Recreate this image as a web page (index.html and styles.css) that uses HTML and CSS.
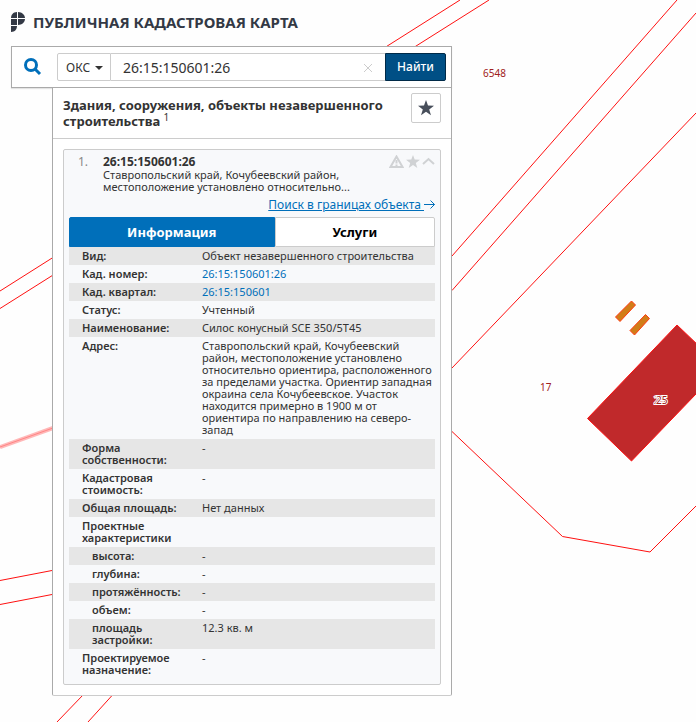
FILE: index.html
```html
<!DOCTYPE html>
<html lang="ru">
<head>
    <meta charset="UTF-8">
    <meta name="viewport" content="width=device-width, initial-scale=1.0">
    <title>Публичная кадастровая карта</title>
    <link rel="stylesheet" href="styles.css">
</head>
<body>
    <!-- Map layer -->
    <svg class="map" viewBox="0 0 696 722" preserveAspectRatio="xMinYMin slice" aria-hidden="true">
        <g class="borders">
            <path d="M460 0L0 291M489 0L0 308.5"/>
            <path d="M677 0L452 256M696 13L452 290.5"/>
            <path d="M696 113L452 368"/>
            <path d="M452 431.5L562.5 536.5L650 552"/>
            <path d="M650 552L696 506"/>
            <path d="M0 580.5L52 570.5M0 604.5L52 594.5"/>
            <path d="M83 695L57 722M112.5 695L88 722"/>
        </g>
        <path class="zone" d="M0 447L53 428"/>
        <path class="zone-axis" d="M0 447L53 428"/>
        <path class="building" d="M677 325L587.5 418.5L631.5 461L721.5 367.5Z"/>
        <path class="structure" d="M631.5 301L635.5 305L620 321.5L615.5 317Z"/>
        <path class="structure" d="M645.5 314.5L649.5 318.5L634.5 335L630 330.5Z"/>
        <text class="label" x="483" y="77">6548</text>
        <text class="label" x="540" y="391">17</text>
        <text class="label label-halo" x="654" y="404">23</text>
        <text class="label label-halo" x="656" y="404">25</text>
    </svg>

    <header class="header">
        <svg class="logo" width="14" height="20" viewBox="0 0 14 20" aria-hidden="true">
            <path d="M6 0V6H0C0 3 2 0 6 0ZM7 0C11 0 14 3 14 6H7ZM0 7H6V13H0ZM7 7H14C14 10 11 13 7 13ZM0 14H6C6 17 4 20 0 20Z"/>
        </svg>
        <h1 class="title">ПУБЛИЧНАЯ КАДАСТРОВАЯ КАРТА</h1>
    </header>

    <main class="sidebar">
        <form class="search" onsubmit="return false">
            <svg class="search-icon" width="18" height="18" viewBox="0 0 18 18" aria-hidden="true">
                <circle cx="7" cy="7" r="5.5"/>
                <path d="M11 11L16 16"/>
            </svg>
            <div class="search-group">
                <div class="select-wrap">
                    <select class="type-select" aria-label="Тип объекта">
                        <option>ОКС</option>
                        <option>Участки</option>
                    </select>
                    <svg class="caret" width="8" height="4" viewBox="0 0 8 4" aria-hidden="true"><path d="M0 0H8L4 4Z"/></svg>
                </div>
                <div class="query-wrap">
                    <input class="query" id="query" type="text" value="26:15:150601:26" aria-label="Кадастровый номер">
                    <button class="clear-btn" type="button" aria-label="Очистить" onclick="document.getElementById('query').value = ''">
                        <svg width="10" height="10" viewBox="0 0 10 10"><path d="M1 1L9 9M9 1L1 9"/></svg>
                    </button>
                </div>
                <button class="find-btn" type="submit">Найти</button>
            </div>
        </form>

        <section class="results">
            <div class="results-head">
                <h2 class="results-title">Здания, сооружения, объекты незавершенного строительства <sup>1</sup></h2>
                <button class="fav-btn" type="button" aria-label="Избранное">
                    <svg width="18" height="18" viewBox="0 0 18 18"><path d="M9 1L11 6.6L17 6.8L12.2 10.4L14 16.3L9 12.8L4 16.3L5.8 10.4L1 6.8L7 6.6Z"/></svg>
                </button>
            </div>

            <article class="card">
                <div class="card-head">
                    <span class="card-num">1.</span>
                    <div class="card-text">
                        <h3 class="card-title">26:15:150601:26</h3>
                        <p class="card-address">Ставропольский край, Кочубеевский район,<br>местоположение установлено относительно...</p>
                    </div>
                    <div class="card-tools">
                        <svg width="15" height="13" viewBox="0 0 15 13" aria-hidden="true">
                            <path class="tool-line" d="M7.5 1.5L13.5 12H1.5Z"/>
                            <path class="tool-line" d="M7.5 5V8.5M7.5 9.5V11"/>
                        </svg>
                        <svg width="14" height="13" viewBox="0 0 14 13" aria-hidden="true">
                            <path class="tool-fill" d="M7 0L8.7 4.6L14 4.8L9.8 7.9L11.3 13L7 10L2.7 13L4.2 7.9L0 4.8L5.3 4.6Z"/>
                        </svg>
                        <svg width="13" height="13" viewBox="0 0 13 13" aria-hidden="true">
                            <path class="tool-line" d="M1 9L6.5 4L12 9"/>
                        </svg>
                    </div>
                </div>
                <div class="bounds">
                    <a class="bounds-link" href="#bounds">Поиск в границах объекта
                        <svg width="11" height="9" viewBox="0 0 11 9" aria-hidden="true"><path d="M0 4.5H10.5M6.5 .5L10.5 4.5L6.5 8.5"/></svg></a>
                </div>

                <div class="tabs" role="tablist">
                    <button class="tab tab-info active" type="button" role="tab" aria-selected="true">Информация</button>
                    <button class="tab tab-services" type="button" role="tab" aria-selected="false">Услуги</button>
                </div>

                <table class="info">
                    <tr><th scope="row">Вид:</th><td>Объект незавершенного строительства</td></tr>
                    <tr><th scope="row">Кад. номер:</th><td><a href="#object">26:15:150601:26</a></td></tr>
                    <tr><th scope="row">Кад. квартал:</th><td><a href="#quarter">26:15:150601</a></td></tr>
                    <tr><th scope="row">Статус:</th><td>Учтенный</td></tr>
                    <tr><th scope="row">Наименование:</th><td>Силос конусный SCE 350/5T45</td></tr>
                    <tr>
                        <th scope="row">Адрес:</th>
                        <td class="address">Ставропольский край, Кочубеевский<br>
                            район, местоположение установлено<br>
                            относительно ориентира, расположенного<br>
                            за пределами участка. Ориентир западная<br>
                            окраина села Кочубеевское. Участок<br>
                            находится примерно в 1900 м от<br>
                            ориентира по направлению на северо-<br>
                            запад</td>
                    </tr>
                    <tr><th scope="row">Форма собственности:</th><td>-</td></tr>
                    <tr><th scope="row">Кадастровая стоимость:</th><td>-</td></tr>
                    <tr><th scope="row">Общая площадь:</th><td>Нет данных</td></tr>
                    <tr><th scope="row">Проектные характеристики</th><td></td></tr>
                    <tr class="sub"><th scope="row">высота:</th><td>-</td></tr>
                    <tr class="sub"><th scope="row">глубина:</th><td>-</td></tr>
                    <tr class="sub"><th scope="row">протяжённость:</th><td>-</td></tr>
                    <tr class="sub"><th scope="row">объем:</th><td>-</td></tr>
                    <tr class="sub"><th scope="row">площадь застройки:</th><td>12.3 кв. м</td></tr>
                    <tr><th scope="row">Проектируемое назначение:</th><td>-</td></tr>
                </table>
            </article>
        </section>
    </main>
</body>
</html>
```
FILE: styles.css
```css
:root {
    --blue: #006fba;
    --blue-dark: #004f85;
    --text: #333333;
    --border: #cccccc;
    --border-dark: #aaaaaa;
    --stripe: #e6e6e6;
    --surface: #f8f9fb;
}

* {
    margin: 0;
    padding: 0;
    box-sizing: border-box;
}

body {
    min-height: 100vh;
    padding: 0 11px 27px;
    background: #fefefe;
    color: var(--text);
    font-family: "Noto Sans", "Open Sans", sans-serif;
    font-size: 11px;
    line-height: 12px;
}

button,
input,
select {
    font-family: inherit;
    color: inherit;
}

button {
    cursor: pointer;
}

a {
    color: var(--blue);
    text-decoration: none;
}

/* Map */
.map {
    position: absolute;
    top: 0;
    left: 0;
    width: 100%;
    height: 100%;
    z-index: -1;
}

.borders {
    fill: none;
    stroke: #ff1010;
    stroke-width: 1;
}

.zone {
    stroke: #ffb8b8;
    stroke-width: 4;
}

.zone-axis {
    stroke: #ff8585;
    stroke-width: 1;
}

.building {
    fill: #c0292b;
    stroke: #ff1010;
}

.structure {
    fill: #d17d18;
    stroke: #ff3a10;
}

.label {
    fill: #a02020;
    font-size: 10px;
}

.label-halo {
    stroke: #ffffff;
    stroke-width: 2;
    paint-order: stroke;
}

/* Header */
.header {
    display: flex;
    align-items: center;
    gap: 8px;
    height: 46px;
    padding-bottom: 2px;
}

.logo {
    fill: #333945;
}

.title {
    font-size: 15px;
    line-height: 20px;
    font-weight: 700;
    color: #333945;
}

.sidebar {
    max-width: 441px;
}

/* Search */
.search {
    display: flex;
    align-items: center;
    gap: 15px;
    padding: 6px 5px 6px 12px;
    background: #ffffff;
    border: 1px solid var(--border-dark);
    box-shadow: 0 1px 1px rgba(0, 0, 0, 0.1);
}

.search-icon {
    fill: none;
    stroke: var(--blue);
    stroke-width: 3;
    flex: none;
}

.search-group {
    display: flex;
    flex: 1;
    height: 28px;
}

.select-wrap {
    position: relative;
    width: 54px;
}

.type-select {
    width: 100%;
    height: 100%;
    padding-left: 8px;
    appearance: none;
    background: #ffffff;
    border: 1px solid var(--border);
    border-radius: 2px 0 0 2px;
    font-size: 12px;
}

.caret {
    position: absolute;
    right: 8px;
    top: 13px;
    fill: var(--text);
    pointer-events: none;
}

.query-wrap {
    position: relative;
    flex: 1;
}

.query {
    width: 100%;
    height: 100%;
    padding: 0 32px 0 12px;
    background: #ffffff;
    border: solid var(--border);
    border-width: 1px 0;
    font-size: 14px;
}

.clear-btn {
    position: absolute;
    right: 12px;
    top: 10px;
    width: 10px;
    height: 10px;
    background: none;
    border: none;
}

.clear-btn svg {
    display: block;
    stroke: var(--border);
}

.find-btn {
    width: 61px;
    padding-bottom: 2px;
    background: var(--blue-dark);
    border: 1px solid #002a48;
    border-radius: 0 2px 2px 0;
    color: #ffffff;
    font-size: 12px;
    font-weight: 500;
}

/* Results */
.results {
    margin-left: 41px;
    padding-bottom: 10px;
    background: #ffffff;
    border: 1px solid var(--border-dark);
    border-top: none;
    border-bottom-color: var(--border);
    border-radius: 0 0 2px 2px;
}

.results-head {
    display: flex;
    align-items: flex-start;
    justify-content: space-between;
    gap: 12px;
    min-height: 51px;
    padding: 5px 10px 5px 10px;
    border-bottom: 1px solid var(--border);
}

.results-title {
    padding-top: 4px;
    font-size: 13px;
    line-height: 16px;
    font-weight: 700;
}

.results-title sup {
    font-size: 10px;
    line-height: 0;
    font-weight: 400;
}

.fav-btn {
    display: flex;
    align-items: center;
    justify-content: center;
    flex: none;
    width: 30px;
    height: 30px;
    background: #ffffff;
    border: 1px solid var(--border);
    border-radius: 2px;
    fill: #474e5a;
}

.card {
    margin: 10px 10px 0;
    padding: 5px;
    background: var(--surface);
    border: 1px solid var(--border);
    border-radius: 2px;
}

.card-head {
    display: flex;
    padding-left: 9px;
}

.card-num {
    width: 25px;
    color: #888888;
    font-size: 12px;
    line-height: 14px;
}

.card-text {
    flex: 1;
}

.card-title {
    font-size: 12px;
    line-height: 14px;
    font-weight: 700;
}

.card-address {
    white-space: nowrap;
}

.card-tools {
    display: flex;
    gap: 2px;
}

.tool-line {
    fill: none;
    stroke: #d0d2d4;
    stroke-width: 2;
}

.tool-fill {
    fill: #d0d2d4;
}

.bounds {
    padding: 4px 0;
    text-align: right;
}

.bounds-link {
    font-size: 12px;
    line-height: 16px;
    text-decoration: underline;
}

.bounds-link svg {
    fill: none;
    stroke: var(--blue);
}

.tabs {
    display: flex;
}

.tab {
    height: 30px;
    background: #ffffff;
    border: 1px solid var(--border);
    color: #000000;
    font-size: 13px;
    font-weight: 700;
}

.tab-info {
    flex: 9;
    border-radius: 2px 0 0 0;
}

.tab-services {
    flex: 7;
    border-radius: 0 2px 0 0;
}

.tab.active {
    background: var(--blue);
    border-color: var(--blue);
    color: #ffffff;
}

.info {
    width: 100%;
    table-layout: fixed;
    border-collapse: collapse;
}

.info tr:nth-child(odd) {
    background: var(--stripe);
}

.info th,
.info td {
    padding: 3px 0;
    text-align: left;
    vertical-align: top;
}

.info th {
    width: 133px;
    padding-left: 13px;
    padding-right: 10px;
    font-weight: 600;
}

.info .sub th {
    padding-left: 23px;
}

.info .address {
    white-space: nowrap;
}
```
